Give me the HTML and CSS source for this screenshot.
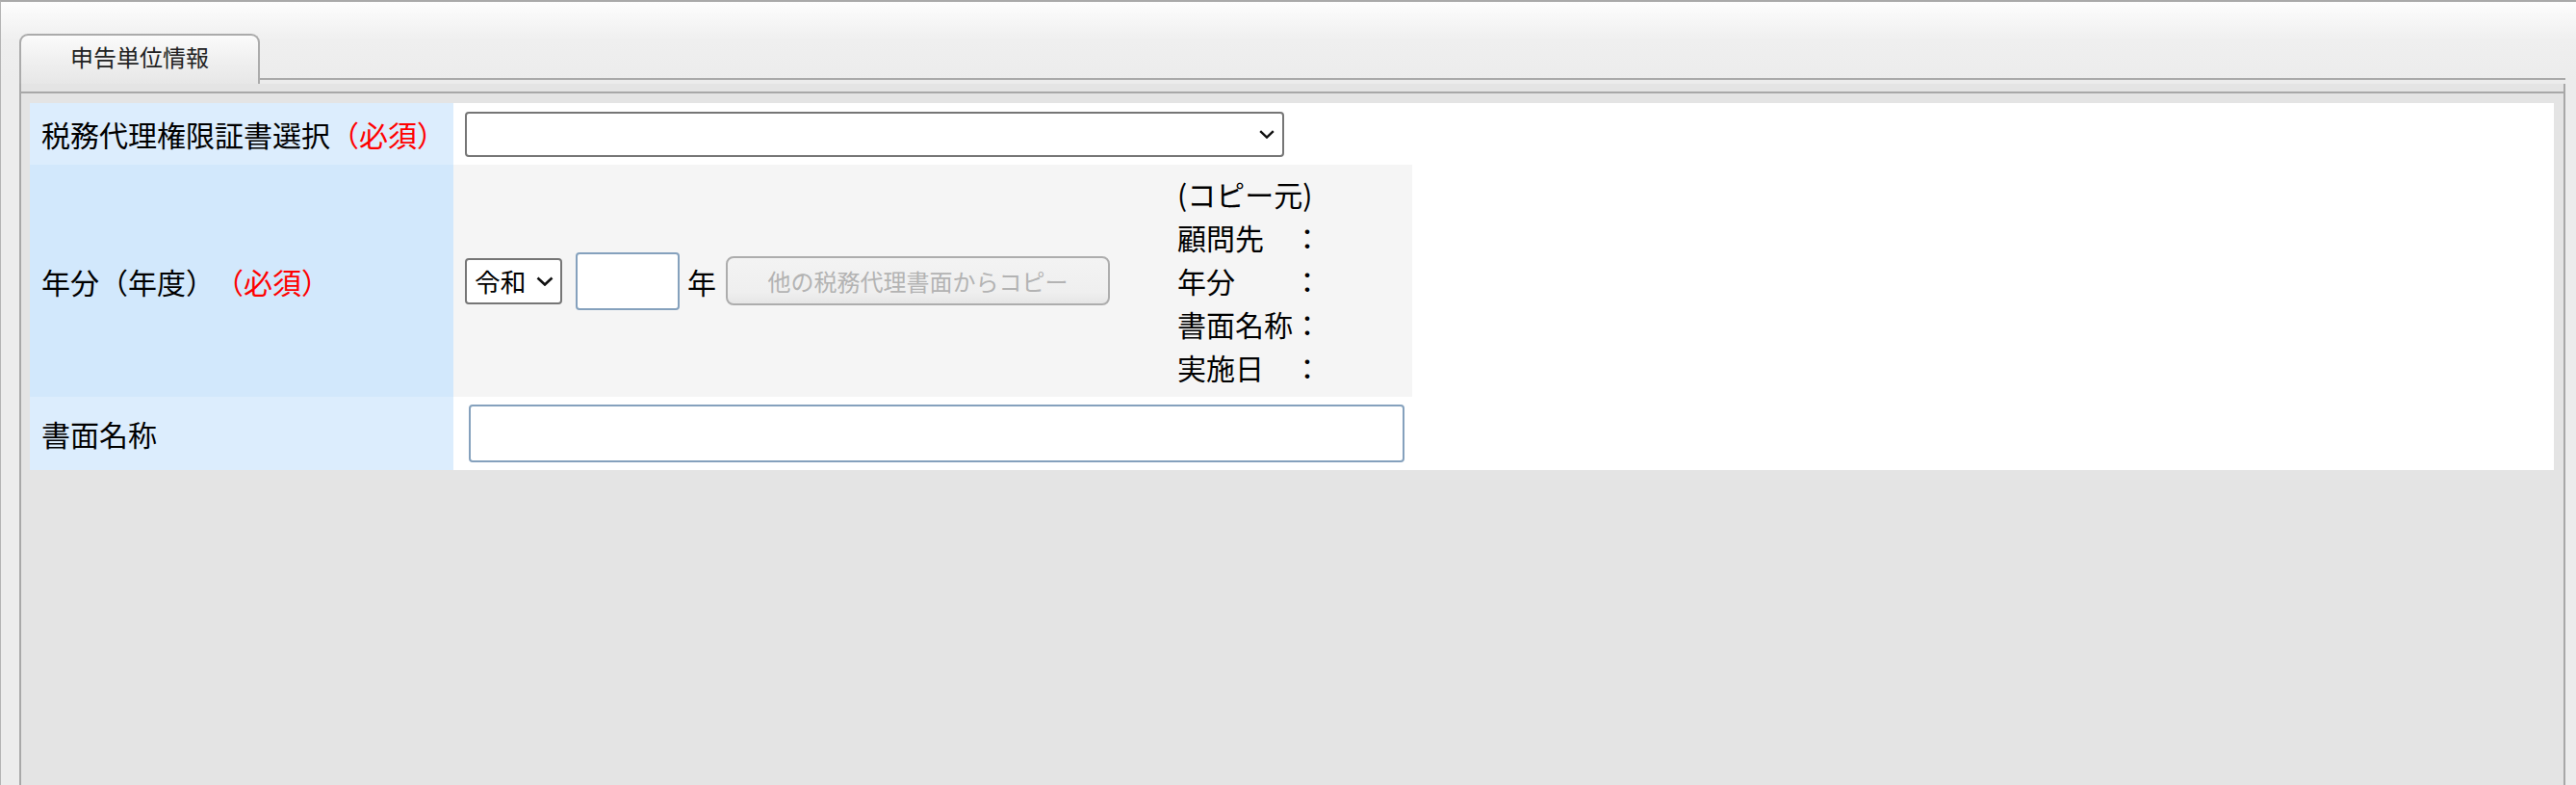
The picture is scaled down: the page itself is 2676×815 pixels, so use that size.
FILE: index.html
```html
<!DOCTYPE html>
<html lang="ja">
<head>
<meta charset="utf-8">
<title>申告単位情報</title>
<link rel="stylesheet" href="styles.css">
</head>
<body>
<div class="page">
  <div class="tabbar">
    <div class="tab">申告単位情報</div>
    <div class="tabline"></div>
  </div>
  <div class="panel">
    <div class="panel-rule"></div>
    <div class="form">
      <div class="row row-cert">
        <div class="label">税務代理権限証書選択<span class="req">（必須）</span></div>
        <div class="value">
          <div class="select select-wide" role="combobox">
            <span class="select-text"></span>
            <svg class="chev" width="16" height="9" viewBox="0 0 16 9"><path d="M1.2 1.2 L8 7.6 L14.8 1.2" fill="none" stroke="#111" stroke-width="2.4"/></svg>
          </div>
        </div>
      </div>
      <div class="row row-year">
        <div class="label label-strong">年分（年度）<span class="req">（必須）</span></div>
        <div class="value value-gray">
          <div class="controls">
            <div class="select select-era" role="combobox">
              <span class="select-text">令和</span>
              <svg class="chev" width="18" height="10" viewBox="0 0 18 10"><path d="M1.5 1.5 L9 8.5 L16.5 1.5" fill="none" stroke="#111" stroke-width="2.6"/></svg>
            </div>
            <input class="input input-year" type="text">
            <span class="unit">年</span>
            <button class="btn" disabled>他の税務代理書面からコピー</button>
          </div>
          <div class="info">
            <div>(コピー元)</div>
            <div>顧問先　：</div>
            <div>年分　　：</div>
            <div>書面名称：</div>
            <div>実施日　：</div>
          </div>
        </div>
      </div>
      <div class="row row-name">
        <div class="label">書面名称</div>
        <div class="value value-name">
          <input class="input input-name" type="text">
        </div>
      </div>
    </div>
  </div>
</div>
</body>
</html>
```

FILE: styles.css
```css
html, body {
  margin: 0;
  padding: 0;
}

body {
  font-family: "Noto Sans CJK JP", "Noto Sans", sans-serif;
  color: #000;
  background: #ececec;
}

.page {
  box-sizing: border-box;
  width: 2676px;
  height: 815px;
  overflow: hidden;
  border-top: 2px solid #a9a9a9;
  border-left: 1px solid #b4b4b4;
  padding: 33px 0 0 19px;
  background: linear-gradient(#fdfdfd 0, #efefef 40px, #ececec 80px, #ececec 100%);
}

.tabbar {
  display: flex;
  align-items: flex-end;
  width: 2645px;
  height: 52px;
}

.tab {
  box-sizing: border-box;
  width: 250px;
  height: 52px;
  border: 2px solid #ababab;
  border-bottom: none;
  border-radius: 9px 9px 0 0;
  background: linear-gradient(#fbfbfb, #f1f1f1 45%, #e7e7e7);
  padding-top: 7px;
  font-size: 24px;
  line-height: 30px;
  text-align: center;
  color: #222;
}

.tabline {
  flex: 1;
  height: 6px;
  border-top: 2px solid #a9a9a9;
  box-sizing: border-box;
}

.panel {
  box-sizing: border-box;
  width: 2645px;
  height: 728px;
  background: #e4e4e4;
  border-left: 2px solid #a8a8a8;
  border-right: 2px solid #a8a8a8;
  padding-top: 8px;
}

.panel-rule {
  height: 2px;
  background: #a8a8a8;
}

.form {
  margin: 10px 10px 0 9px;
  background: #fff;
}

.row {
  display: flex;
}

.row-cert { height: 64px; }
.row-year { height: 241px; }
.row-name { height: 76px; }

.label {
  box-sizing: border-box;
  width: 440px;
  padding-left: 12px;
  display: flex;
  align-items: center;
  font-size: 30px;
  line-height: 40px;
  background: #dcedfd;
  white-space: nowrap;
}

.label-strong {
  background: #d2e8fc;
}

.req {
  color: #ff0000;
}

.value {
  box-sizing: border-box;
  width: 996px;
  padding-left: 12px;
  display: flex;
  align-items: center;
}

.value-gray {
  background: #f5f5f5;
}

.value-name {
  padding-left: 16px;
}

.select {
  box-sizing: border-box;
  display: flex;
  align-items: center;
  justify-content: space-between;
  background: #fff;
  border: 2px solid #767676;
  border-radius: 4px;
}

.select-wide {
  width: 851px;
  height: 47px;
  padding: 0 8px 0 8px;
}

.select-era {
  width: 101px;
  height: 48px;
  padding: 0 7px 0 8px;
  font-size: 26.7px;
  line-height: 30px;
}

.chev {
  display: block;
  flex: none;
}

.controls {
  box-sizing: border-box;
  width: 740px;
  display: flex;
  align-items: center;
}

.input {
  box-sizing: border-box;
  margin: 0;
  padding: 0 8px;
  background: #fff;
  border: 2px solid #85a1bd;
  border-radius: 4px;
  font-family: inherit;
  font-size: 26px;
  outline: none;
}

.input-year {
  width: 108px;
  height: 60px;
  margin-left: 14px;
}

.unit {
  margin-left: 8px;
  font-size: 30px;
  line-height: 40px;
}

.btn {
  box-sizing: border-box;
  width: 399px;
  height: 51px;
  margin-left: 10px;
  padding: 0;
  border: 2px solid #adadad;
  border-radius: 8px;
  background: linear-gradient(#f3f3f3, #efefef 75%, #e6e6e6);
  color: #b3b3b3;
  font-family: inherit;
  font-size: 24px;
  line-height: 30px;
}

.info {
  font-size: 30px;
  line-height: 45px;
  white-space: nowrap;
}

.input-name {
  width: 972px;
  height: 60px;
}
```
